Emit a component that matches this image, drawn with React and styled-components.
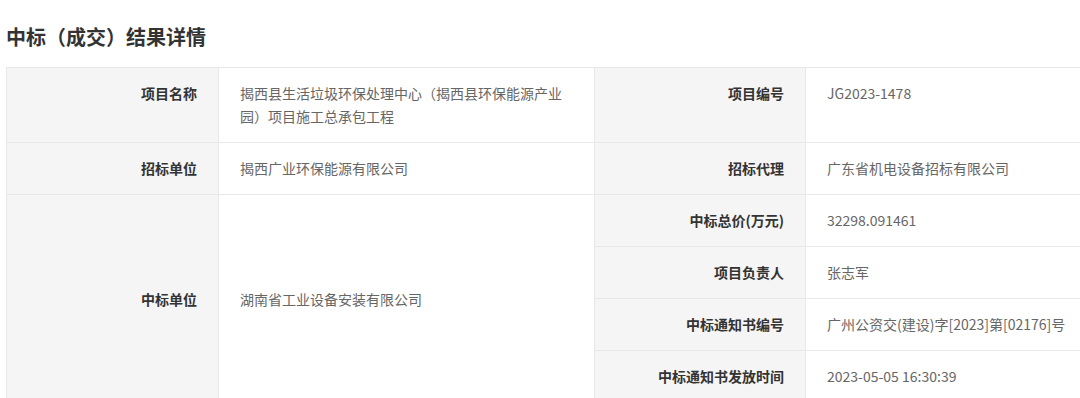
import React from "react";
import styled, { createGlobalStyle } from "styled-components";

const GlobalStyle = createGlobalStyle`
    html, body {
        margin: 0;
        padding: 0;
        overflow: hidden;
        background: #fff;
    }
    body {
        font-family: "Noto Sans CJK SC", "Noto Sans", "Liberation Sans", sans-serif;
    }
`;

const Page = styled.div`
    padding: 23px 0 0 6px;
`;

const Title = styled.h2`
    margin: 0 0 16px;
    font-size: 20px;
    line-height: 28px;
    font-weight: 700;
    color: #333;
`;

const Table = styled.table`
    width: 1100px;
    table-layout: fixed;
    border-collapse: collapse;
    font-size: 14px;
    line-height: 23px;
`;

const Cell = styled.td`
    border: 1px solid #e8e8e8;
    padding: 14px 21px 13px;
    vertical-align: ${props => (props.middle ? "middle" : "top")};
    word-break: break-all;
`;

const Label = styled(Cell)`
    background: #f5f5f5;
    color: #333;
    font-weight: 700;
    text-align: right;
`;

const Value = styled(Cell)`
    background: #fff;
    color: #666;
`;

const Row = styled.tr`
    height: ${props => props.h || 52}px;
`;

const App = () => {
    return (<Page>
        <GlobalStyle />
        <Title>中标（成交）结果详情</Title>
        <Table>
            <colgroup>
                <col style={{ width: 212 }} />
                <col style={{ width: 376 }} />
                <col style={{ width: 211 }} />
                <col />
            </colgroup>
            <tbody>
                <Row h={75}>
                    <Label>项目名称</Label>
                    <Value>揭西县生活垃圾环保处理中心（揭西县环保能源产业园）项目施工总承包工程</Value>
                    <Label>项目编号</Label>
                    <Value>JG2023-1478</Value>
                </Row>
                <Row>
                    <Label>招标单位</Label>
                    <Value>揭西广业环保能源有限公司</Value>
                    <Label>招标代理</Label>
                    <Value>广东省机电设备招标有限公司</Value>
                </Row>
                <Row>
                    <Label middle rowSpan={4}>中标单位</Label>
                    <Value middle rowSpan={4}>湖南省工业设备安装有限公司</Value>
                    <Label>中标总价(万元)</Label>
                    <Value>32298.091461</Value>
                </Row>
                <Row>
                    <Label>项目负责人</Label>
                    <Value>张志军</Value>
                </Row>
                <Row>
                    <Label>中标通知书编号</Label>
                    <Value>广州公资交(建设)字[2023]第[02176]号</Value>
                </Row>
                <Row>
                    <Label>中标通知书发放时间</Label>
                    <Value>2023-05-05 16:30:39</Value>
                </Row>
            </tbody>
        </Table>
    </Page>);
};

export default App;
